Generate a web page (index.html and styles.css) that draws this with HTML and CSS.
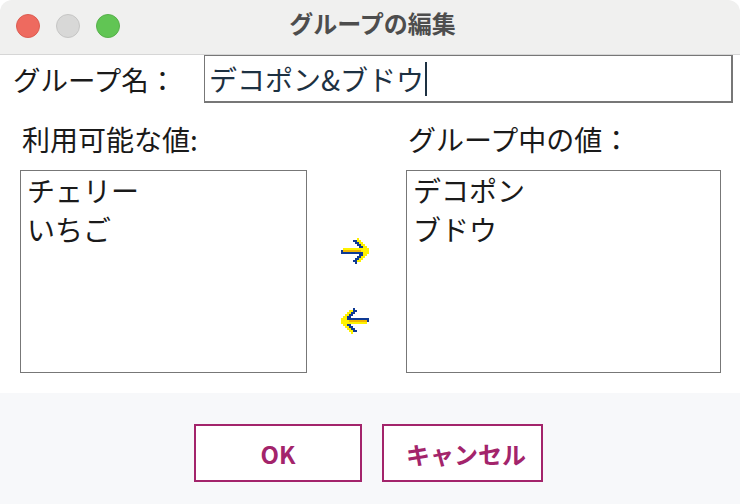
FILE: index.html
```html
<!DOCTYPE html>
<html lang="ja">

<head>
  <meta charset="UTF-8" />
  <title>グループの編集</title>
  <link rel="stylesheet" href="styles.css">
</head>

<body>
  <svg class="defs" width="0" height="0">
    <symbol id="arrow" viewBox="0 0 28 26">
      <g fill="none" stroke-width="2" shape-rendering="crispEdges">
        <path stroke="#fff200" d="M16 1h2M16 3h4M18 5h4M20 7h4M22 9h4M2 11h26M20 13h8M22 15h6M22 17h4M20 19h4M18 21h4M16 23h4" />
        <path stroke="#f2b600" d="M2 13h18" />
        <path stroke="#0f3a94" d="M12 3h4M14 5h4M16 7h4M18 9h4M0 13h2M0 15h22M18 17h4M16 19h4M14 21h4M12 23h4M14 25h2" />
      </g>
    </symbol>
  </svg>
  <div class="titlebar">
    <span class="light red"></span>
    <span class="light gray"></span>
    <span class="light green"></span>
    <h1 class="title">グループの編集</h1>
  </div>
  <div class="content">
    <div class="name-row">
      <label class="name-label">グループ名：</label>
      <div class="name-input">デコポン&amp;ブドウ<span class="caret"></span></div>
    </div>
    <div class="picker">
      <div class="col col-left">
        <div class="col-label">利用可能な値:</div>
        <ul class="list">
          <li>チェリー</li>
          <li>いちご</li>
        </ul>
      </div>
      <div class="arrows">
        <svg class="arrow"><use href="#arrow" /></svg>
        <svg class="arrow flip"><use href="#arrow" /></svg>
      </div>
      <div class="col col-right">
        <div class="col-label">グループ中の値：</div>
        <ul class="list">
          <li>デコポン</li>
          <li>ブドウ</li>
        </ul>
      </div>
    </div>
  </div>
  <div class="footer">
    <button class="btn btn-ok">OK</button>
    <button class="btn btn-cancel">キャンセル</button>
  </div>
</body>

</html>
```

FILE: styles.css
```css
* {
  box-sizing: border-box;
}

html,
body {
  margin: 0;
  height: 100%;
}

body {
  display: flex;
  flex-direction: column;
  width: 740px;
  height: 504px;
  overflow: hidden;
  background: #fff;
  color: #1a1a1a;
  font-family: "Noto Sans CJK JP", "Noto Sans", sans-serif;
  font-size: 28px;
}

.defs {
  position: absolute;
}

.titlebar {
  display: flex;
  align-items: center;
  position: relative;
  height: 55px;
  padding: 0 0 3px 16px;
  border-bottom: 1px solid #d6d6d6;
  border-top-left-radius: 12px;
  border-top-right-radius: 12px;
  background: #f0f0ef;
}

.light {
  width: 24px;
  height: 24px;
  margin-right: 16px;
  border-radius: 50%;
}

.red {
  background: #ee6a5f;
  border: 1px solid #dc5d52;
}

.gray {
  background: #d8d8d7;
  border: 1px solid #c6c6c5;
}

.green {
  background: #61c554;
  border: 1px solid #57b04b;
}

.title {
  position: absolute;
  left: 0;
  right: 0;
  top: 5px;
  margin: 0;
  padding-left: 5px;
  text-align: center;
  color: #4d4d4d;
  font-size: 24px;
  font-weight: 700;
  line-height: 36px;
}

.content {
  flex: 1;
  padding: 0 7px 0 0;
}

.name-row {
  display: flex;
  align-items: center;
  height: 48px;
}

.name-label {
  width: 204px;
  padding: 0 0 0 13px;
  font-size: 27.5px;
  white-space: nowrap;
}

.name-input {
  flex: 1;
  display: flex;
  align-items: center;
  height: 48px;
  padding-left: 4px;
  border: 2px solid #777;
  border-top-width: 1px;
  border-left-width: 1px;
  color: #1d3142;
}

.caret {
  width: 2px;
  height: 34px;
  margin-left: 1px;
  background: #1d3142;
}

.picker {
  display: flex;
  padding: 16px 0 0 20px;
}

.col-label {
  height: 51px;
  padding: 2px 0 12px 2px;
  line-height: 37px;
}

.col-left {
  width: 287px;
}

.col-right {
  width: 315px;
}

.list {
  height: 203px;
  margin: 0;
  padding: 0 0 0 6px;
  border: 1px solid #777;
  list-style: none;
  line-height: 39px;
}

.arrows {
  display: flex;
  flex-direction: column;
  align-items: center;
  gap: 44px;
  width: 99px;
  padding: 119px 4px 0 0;
}

.arrow {
  display: block;
  width: 28px;
  height: 26px;
}

.flip {
  transform: rotate(180deg);
}

.footer {
  display: flex;
  gap: 20px;
  height: 111px;
  padding: 31px 0 0 194px;
  background: #f7f8fa;
}

.btn {
  height: 58px;
  padding: 0;
  border: 2px solid #a3246b;
  border-radius: 0;
  background: #fff;
  color: #a3246b;
  font-family: inherit;
  font-size: 24px;
  font-weight: 700;
}

.btn-ok {
  width: 168px;
}

.btn-cancel {
  width: 161px;
  padding-left: 7px;
}
```
